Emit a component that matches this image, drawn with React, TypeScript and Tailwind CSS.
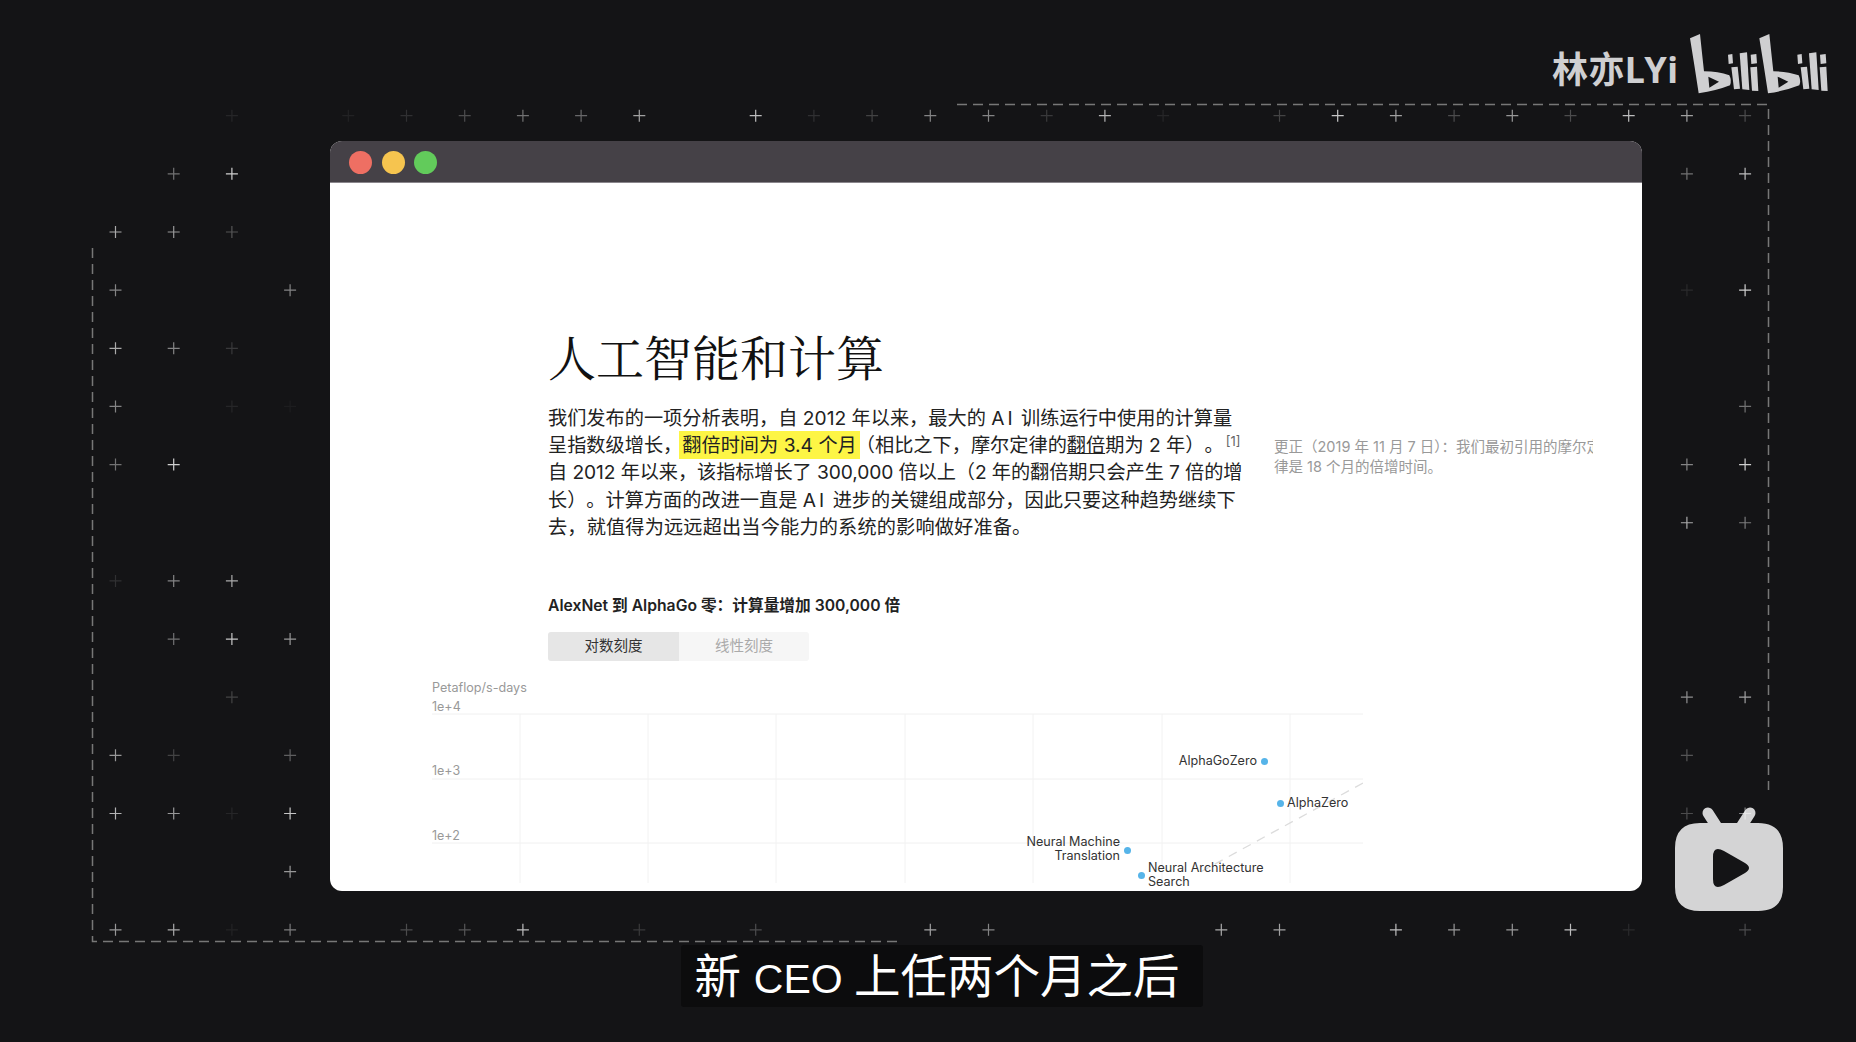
const plusRows: [number, [number, number][]][] = [
  [0, [[2, 0.1], [4, 0.08], [5, 0.15], [6, 0.3], [7, 0.5], [8, 0.45], [9, 0.75], [11, 0.9], [12, 0.15], [13, 0.25], [14, 0.6], [15, 0.6], [16, 0.2], [17, 0.85], [18, 0.1], [20, 0.25], [21, 0.95], [22, 0.75], [23, 0.3], [24, 0.7], [25, 0.3], [26, 0.9], [27, 0.75], [28, 0.3]]],
  [1, [[1, 0.5], [2, 1], [27, 0.5], [28, 0.9]]],
  [2, [[0, 0.8], [1, 0.7], [2, 0.35]]],
  [3, [[0, 0.6], [3, 0.6], [27, 0.12], [28, 1]]],
  [4, [[0, 0.8], [1, 0.6], [2, 0.2]]],
  [5, [[0, 0.6], [2, 0.1], [3, 0.05], [28, 0.5]]],
  [6, [[0, 0.5], [1, 1], [27, 0.6], [28, 1]]],
  [7, [[27, 0.8], [28, 0.55]]],
  [8, [[0, 0.15], [1, 0.6], [2, 0.8]]],
  [9, [[1, 0.5], [2, 0.95], [3, 0.7]]],
  [10, [[2, 0.25], [27, 0.65], [28, 0.75]]],
  [11, [[0, 0.7], [1, 0.25], [3, 0.4], [27, 0.35]]],
  [12, [[0, 0.85], [1, 0.7], [2, 0.1], [3, 0.95], [27, 0.3], [28, 0.6]]],
  [13, [[3, 0.7]]],
  [14, [[0, 0.7], [1, 0.8], [2, 0.08], [3, 0.55], [5, 0.3], [6, 0.35], [7, 0.9], [9, 0.2], [11, 0.3], [14, 0.75], [15, 0.6], [19, 0.8], [20, 0.75], [22, 0.9], [23, 0.7], [24, 0.7], [25, 0.9], [26, 0.12], [28, 0.3]]],
];

function Backdrop() {
  return (
    <svg className="absolute inset-0" width="1856" height="1042" fill="none">
      {plusRows.map(([row, cells]) =>
        cells.map(([col, op]) => {
          const x = 115.5 + col * 58.2;
          const y = 115.7 + row * 58.15;
          return (
            <path
              key={row + "-" + col}
              d={`M${x - 6} ${y}H${x + 6}M${x} ${y - 6}V${y + 6}`}
              stroke="#fff"
              strokeWidth="1.2"
              opacity={op * 0.8}
            />
          );
        }),
      )}
      <path d="M957 104.5H1768.5V790" stroke="#777" strokeWidth="1.5" strokeDasharray="10 6" />
      <path d="M92.5 248V941.5H903" stroke="#777" strokeWidth="1.5" strokeDasharray="10 6" />
    </svg>
  );
}

function BiliWord() {
  return (
    <>
      <path
        fillRule="evenodd"
        d="M570 85L600 72Q606 130 612 184Q655 184 688 196Q696 212 690 226Q650 242 596 250Q584 170 570 85ZM625 200L657 215L628 233Z"
      />
      <path d="M684 134L697 132L699 160L686 162ZM694 172L713 170L720 236L702 238Z" />
      <path d="M719 130L741 127L748 240L727 238Z" />
      <path d="M752 134L769 132L771 160L754 162ZM751 172L771 170L775 243L756 242Z" />
    </>
  );
}

function BiliLogo() {
  return (
    <svg className="absolute left-[1500px] top-[10px]" width="356" height="130" viewBox="0 0 1068 390" fill="#cfcfd1">
      <BiliWord />
      <g transform="translate(208 0)">
        <BiliWord />
      </g>
    </svg>
  );
}

function TvIcon() {
  return (
    <svg className="absolute left-[1670px] top-[803px]" width="118" height="113" viewBox="0 0 118 113" fill="#fff" opacity="0.82">
      <path
        fillRule="evenodd"
        d="M5 45Q5 20 30 20H88Q113 20 113 45V84Q113 108 88 108H30Q5 108 5 84ZM43 54Q43 42 54 48L75 60Q83 65 75 70L54 82Q43 88 43 76Z"
      />
      <path d="M38 10L47 24M80 10L71 24" stroke="#fff" strokeWidth="11" strokeLinecap="round" />
    </svg>
  );
}

function Chart() {
  const cols = [88, 216, 344, 473, 601, 730, 858];
  return (
    <div className="relative ml-[102px] mt-[9px] h-[220px] w-[931px] text-[#333] text-[12.6px] leading-[14px]">
      <svg className="absolute inset-0" width="931" height="220" fill="none">
        {[44, 109, 173].map((y) => (
          <path key={y} d={`M0 ${y}H931`} stroke="#f0f0f0" />
        ))}
        {cols.map((x) => (
          <path key={x} d={`M${x} 44V213`} stroke="#f2f2f2" />
        ))}
        <path d="M931 113L763 205" stroke="#dcdcdc" strokeWidth="1.3" strokeDasharray="9 7" />
      </svg>

      <span className="absolute left-0 top-[11px] text-[#999]">Petaflop/s-days</span>
      <span className="absolute left-0 top-[30px] text-[#999] text-[12.5px]">1e+4</span>
      <span className="absolute left-0 top-[94px] text-[#999] text-[12.5px]">1e+3</span>
      <span className="absolute left-0 top-[159px] text-[#999] text-[12.5px]">1e+2</span>

      <span className="absolute right-[106px] top-[84px]">AlphaGoZero</span>
      <span className="absolute left-[829px] top-[88px] size-[7px] rounded-full bg-[#56b4e9]" />
      <span className="absolute left-[845px] top-[130px] size-[7px] rounded-full bg-[#56b4e9]" />
      <span className="absolute left-[855px] top-[126px]">AlphaZero</span>
      <span className="absolute right-[243px] top-[165px] text-right">
        Neural Machine
        <br />
        Translation
      </span>
      <span className="absolute left-[692px] top-[177px] size-[7px] rounded-full bg-[#56b4e9]" />
      <span className="absolute left-[706px] top-[202px] size-[7px] rounded-full bg-[#56b4e9]" />
      <span className="absolute left-[716px] top-[191px]">
        Neural Architecture
        <br />
        Search
      </span>
    </div>
  );
}

export default function App() {
  return (
    <div className="relative h-[1042px] w-[1856px] overflow-hidden bg-[#141416] pl-[330px] pt-[141px] [text-spacing-trim:space-all] font-['Inter','Noto_Sans_CJK_SC',sans-serif]">
      <Backdrop />
      <BiliLogo />
      <span className="absolute left-[1552px] top-[45px] text-[36px] leading-[50px] font-bold tracking-[0.4px] text-[#cfcfd1] font-['Noto_Sans','Noto_Sans_CJK_SC',sans-serif]">
        林亦LYi
      </span>
      <TvIcon />

      <div className="relative flex h-[750px] w-[1312px] flex-col overflow-hidden rounded-[12px] bg-white">
        <div className="flex h-[42px] shrink-0 items-center gap-[9.5px] border-b border-[#8a868c] bg-[#454147] pl-[19px] pt-[2px]">
          <span className="size-[23px] rounded-full bg-[#ee6f63]" />
          <span className="size-[23px] rounded-full bg-[#f6c44f]" />
          <span className="size-[23px] rounded-full bg-[#62cb5b]" />
        </div>

        <div className="flex flex-col pt-[143px]">
          <div className="pl-[218px]">
            <h1 className="text-[48px] leading-[60px] font-normal text-[#111] font-['Noto_Serif_CJK_SC','Liberation_Serif','Noto_Sans_CJK_SC',serif]">
              人工智能和计算
            </h1>
            <div className="mt-[19px] flex">
              <p className="w-[726px] shrink-0 whitespace-nowrap text-[19.2px] leading-[27.2px] text-[#222]">
                我们发布的一项分析表明，自 2012 年以来，最大的 <span className="tracking-[3px]">AI</span> 训练运行中使用的计算量
                <br />
                呈指数级增长，
                <mark className="-ml-[3px] -mr-[4px] bg-[#fdf545] px-[3px] py-[2px] text-[#222]">翻倍时间为 3.4 个月</mark>
                （相比之下，摩尔定律的<span className="underline">翻倍</span>期为 2 年）。
                <sup className="ml-[2px] text-[13px] leading-none text-[#666]">[1]</sup>
                <br />
                <span className="tracking-[-0.09px]">自 2012 年以来，该指标增长了 300,000 倍以上（2 年的翻倍期只会产生 7 倍的增</span>
                <br />
                长）。计算方面的改进一直是 <span className="tracking-[3px]">AI</span> 进步的关键组成部分，因此只要这种趋势继续下
                <br />
                <span className="tracking-[0.15px]">去，就值得为远远超出当今能力的系统的影响做好准备。</span>
              </p>
              <p className="mt-[32px] w-[319px] overflow-hidden whitespace-nowrap text-[14.5px] leading-[20px] text-[#999] [text-spacing-trim:normal]">
                更正（2019 年 11 月 7 日）：我们最初引用的摩尔定
                <br />
                律是 18 个月的倍增时间。
              </p>
            </div>
            <h2 className="mt-[54px] text-[15.7px] leading-[22px] font-semibold text-[#222]">
              AlexNet 到 AlphaGo 零：计算量增加 300,000 倍
            </h2>
            <div className="mt-[15px] flex h-[29px] w-[261px] text-[14.5px]">
              <button className="w-[131px] rounded-l-[3px] bg-[#e6e6e6] pb-[2px] text-[#333]">对数刻度</button>
              <button className="w-[130px] rounded-r-[3px] bg-[#f6f6f6] pb-[2px] text-[#aaa]">线性刻度</button>
            </div>
          </div>
          <Chart />
        </div>
      </div>

      <div className="relative ml-[351px] mt-[54px] flex h-[62px] w-[522px] items-center justify-center rounded-[3px] bg-[#0c0c0d] pr-[10px] pt-[3px] text-[46.5px] text-white font-['Liberation_Sans','Noto_Sans_CJK_SC',sans-serif]">
        <span>
          新 <span className="text-[41px]">CEO </span>上任两个月之后
        </span>
      </div>
    </div>
  );
}
